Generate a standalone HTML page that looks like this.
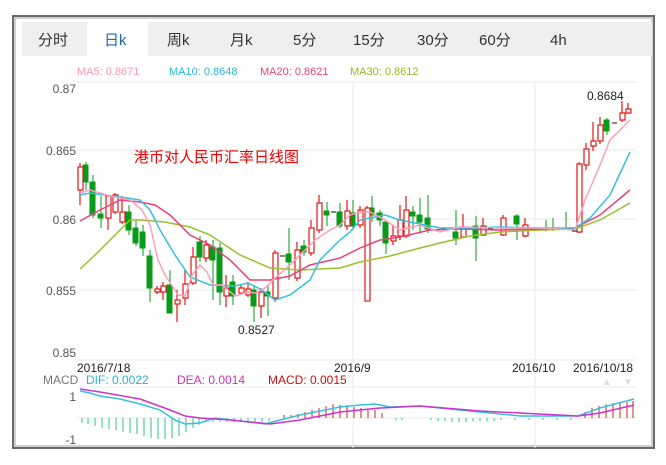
<!DOCTYPE html>
<html><head><meta charset="utf-8"><style>
body{margin:0;background:#fff;width:666px;height:465px;overflow:hidden;font-family:"Liberation Sans","Noto Sans CJK SC",sans-serif}
</style></head><body>
<svg width="666" height="465" xmlns="http://www.w3.org/2000/svg" style="position:absolute;left:0;top:0" font-family="Liberation Sans, Noto Sans CJK SC, sans-serif">
<!-- frame -->
<rect x="13" y="16" width="641" height="432" fill="#fff" stroke="#6a6a6a" stroke-width="2"/>
<rect x="15" y="18" width="637" height="428" fill="none" stroke="#cfcfcf" stroke-width="2"/>
<!-- tabs -->
<rect x="22" y="22" width="630" height="34" fill="#efefef"/>
<rect x="87" y="22" width="61" height="34" fill="#fff"/>
<g font-size="15" fill="#333">
<text x="38" y="45">分时</text>
<text x="104" y="45" fill="#1e69b5">日k</text>
<text x="167" y="45">周k</text>
<text x="230" y="45">月k</text>
<text x="293" y="45">5分</text>
<text x="353" y="45">15分</text>
<text x="417" y="45">30分</text>
<text x="479" y="45">60分</text>
<text x="550" y="45">4h</text>
</g>
<g font-size="11">
<text x="77" y="75" fill="#f79ab8">MA5: 0.8671</text>
<text x="169" y="75" fill="#27b6d9">MA10: 0.8648</text>
<text x="260" y="75" fill="#e8437a">MA20: 0.8621</text>
<text x="350" y="75" fill="#96b821">MA30: 0.8612</text>
</g>
<!-- grid -->
<g stroke="#e8e8e8" stroke-width="1">
<line x1="77" y1="82" x2="636" y2="82"/>
<line x1="77" y1="150" x2="636" y2="150"/>
<line x1="77" y1="219" x2="636" y2="219"/>
<line x1="77" y1="290" x2="636" y2="290"/>
<line x1="77" y1="360" x2="636" y2="360"/>
<line x1="353" y1="82" x2="353" y2="448"/>
<line x1="535" y1="82" x2="535" y2="448"/>
<line x1="77" y1="387" x2="636" y2="387"/>
<line x1="77" y1="418" x2="636" y2="418"/>
</g>
<g font-size="12" fill="#555" text-anchor="end">
<text x="76" y="93">0.87</text>
<text x="76" y="155">0.865</text>
<text x="76" y="224">0.86</text>
<text x="76" y="295">0.855</text>
<text x="76" y="357">0.85</text>
<text x="76" y="401">1</text>
<text x="76" y="444">-1</text>
</g>
<text x="134" y="162" font-size="15" fill="#e00">港币对人民币汇率日线图</text>
<g font-size="12" fill="#222">
<text x="77" y="372">2016/7/18</text>
<text x="334" y="372">2016/9</text>
<text x="512" y="372">2016/10</text>
<text x="573" y="372">2016/10/18</text>
<text x="238" y="334">0.8527</text>
<text x="587" y="100">0.8684</text>
</g>
<text x="43" y="384" font-size="12" fill="#777">MACD</text>
<text x="86" y="384" font-size="12" fill="#27b6d9">DIF: 0.0022</text>
<text x="177" y="384" font-size="12" fill="#cc33bb">DEA: 0.0014</text>
<text x="268" y="384" font-size="12" fill="#c11">MACD: 0.0015</text>
<text x="602" y="385" font-size="10" fill="#ddd">▲</text>
<text x="623" y="385" font-size="10" fill="#ddd">▼</text>
<!-- candles: green filled -->
<g fill="#0a9a1a" stroke="#0a9a1a" stroke-width="1">
<line x1="86" y1="162" x2="86" y2="190"/><rect x="83" y="165" width="5" height="17"/>
<line x1="93" y1="175" x2="93" y2="218"/><rect x="90" y="182" width="5" height="33"/>
<line x1="101" y1="196" x2="101" y2="228"/><rect x="98" y="214" width="5" height="4"/>
<line x1="129" y1="205" x2="129" y2="235"/><rect x="126" y="212" width="5" height="18"/>
<line x1="136" y1="220" x2="136" y2="246"/><rect x="133" y="228" width="5" height="15"/>
<line x1="143" y1="225" x2="143" y2="256"/><rect x="140" y="232" width="5" height="16"/>
<line x1="150" y1="250" x2="150" y2="302"/><rect x="147" y="256" width="5" height="32"/>
<line x1="170" y1="270" x2="170" y2="313"/><rect x="167" y="285" width="5" height="28"/>
<line x1="200" y1="236" x2="200" y2="262"/><rect x="197" y="242" width="5" height="15"/>
<line x1="213" y1="240" x2="213" y2="300"/><rect x="210" y="247" width="5" height="13"/>
<line x1="220" y1="243" x2="220" y2="305"/><rect x="217" y="248" width="5" height="44"/>
<line x1="233" y1="275" x2="233" y2="305"/><rect x="230" y="282" width="5" height="14"/>
<line x1="254" y1="285" x2="254" y2="322"/><rect x="251" y="290" width="5" height="16"/>
<line x1="268" y1="286" x2="268" y2="316"/><rect x="265" y="292" width="5" height="4"/>
<line x1="289" y1="228" x2="289" y2="280"/><rect x="286" y="254" width="5" height="8"/>
<line x1="304" y1="240" x2="304" y2="256"/><rect x="301" y="246" width="5" height="6"/>
<line x1="327" y1="202" x2="327" y2="226"/><rect x="324" y="211" width="5" height="4"/>
<line x1="340" y1="203" x2="340" y2="228"/><rect x="337" y="212" width="5" height="14"/>
<line x1="353" y1="200" x2="353" y2="230"/><rect x="350" y="213" width="5" height="13"/>
<line x1="372" y1="196" x2="372" y2="222"/><rect x="369" y="208" width="5" height="7"/>
<line x1="380" y1="210" x2="380" y2="226"/><rect x="377" y="213" width="5" height="7"/>
<line x1="386" y1="220" x2="386" y2="254"/><rect x="383" y="222" width="5" height="21"/>
<line x1="413" y1="206" x2="413" y2="230"/><rect x="410" y="212" width="5" height="4"/>
<line x1="420" y1="198" x2="420" y2="233"/><rect x="417" y="215" width="5" height="7"/>
<line x1="428" y1="195" x2="428" y2="233"/><rect x="425" y="218" width="5" height="11"/>
<line x1="456" y1="210" x2="456" y2="245"/><rect x="453" y="232" width="5" height="6"/>
<line x1="476" y1="216" x2="476" y2="261"/><rect x="473" y="226" width="5" height="12"/>
<line x1="517" y1="214" x2="517" y2="240"/><rect x="514" y="216" width="5" height="8"/>
<line x1="546" y1="220" x2="546" y2="231"/>
<line x1="553" y1="218" x2="553" y2="231"/>
<line x1="566" y1="212" x2="566" y2="230"/>
<line x1="607" y1="118" x2="607" y2="135"/><rect x="604" y="120" width="5" height="11"/>
</g>
<!-- red hollow -->
<g fill="#fff" stroke="#e31818" stroke-width="1.2">
<line x1="80" y1="163" x2="80" y2="205"/><rect x="78" y="167" width="5" height="23"/>
<line x1="108" y1="195" x2="108" y2="230"/><rect x="106" y="196" width="5" height="22"/>
<line x1="115" y1="193" x2="115" y2="214"/><rect x="113" y="195" width="5" height="17"/>
<line x1="122" y1="196" x2="122" y2="224"/><rect x="120" y="212" width="5" height="10"/>
<line x1="157" y1="286" x2="157" y2="294"/><rect x="155" y="289" width="5" height="3"/>
<line x1="163" y1="282" x2="163" y2="300"/><rect x="161" y="286" width="5" height="6"/>
<line x1="177" y1="290" x2="177" y2="322"/><rect x="175" y="300" width="5" height="4"/>
<line x1="185" y1="270" x2="185" y2="305"/><rect x="183" y="284" width="5" height="14"/>
<line x1="193" y1="247" x2="193" y2="285"/><rect x="191" y="257" width="5" height="26"/>
<line x1="206" y1="240" x2="206" y2="262"/><rect x="204" y="245" width="5" height="13"/>
<line x1="226" y1="275" x2="226" y2="307"/><rect x="224" y="288" width="5" height="8"/>
<line x1="241" y1="285" x2="241" y2="295"/><rect x="239" y="288" width="5" height="5"/>
<line x1="248" y1="282" x2="248" y2="297"/><rect x="246" y="289" width="5" height="6"/>
<line x1="261" y1="288" x2="261" y2="318"/><rect x="259" y="292" width="5" height="14"/>
<line x1="275" y1="250" x2="275" y2="302"/><rect x="273" y="253" width="5" height="45"/>
<line x1="297" y1="242" x2="297" y2="281"/><rect x="295" y="250" width="5" height="28"/>
<line x1="311" y1="220" x2="311" y2="256"/><rect x="309" y="228" width="5" height="25"/>
<line x1="319" y1="195" x2="319" y2="233"/><rect x="317" y="203" width="5" height="27"/>
<line x1="347" y1="200" x2="347" y2="230"/><rect x="345" y="211" width="5" height="15"/>
<line x1="360" y1="206" x2="360" y2="228"/><rect x="358" y="210" width="5" height="15"/>
<line x1="367" y1="206" x2="367" y2="301"/><rect x="365" y="208" width="5" height="93"/>
<line x1="393" y1="225" x2="393" y2="245"/><rect x="391" y="236" width="5" height="5"/>
<line x1="400" y1="205" x2="400" y2="240"/><rect x="398" y="220" width="5" height="16"/>
<line x1="406" y1="196" x2="406" y2="238"/><rect x="404" y="210" width="5" height="26"/>
<line x1="463" y1="214" x2="463" y2="238"/><rect x="461" y="227" width="5" height="10"/>
<line x1="483" y1="218" x2="483" y2="236"/><rect x="481" y="226" width="5" height="9"/>
<line x1="503" y1="215" x2="503" y2="236"/><rect x="501" y="218" width="5" height="17"/>
<line x1="525" y1="218" x2="525" y2="237"/><rect x="523" y="225" width="5" height="11"/>
<line x1="579" y1="162" x2="579" y2="233"/><rect x="577" y="164" width="5" height="68"/>
<line x1="586" y1="143" x2="586" y2="170"/><rect x="584" y="149" width="5" height="16"/>
<line x1="593" y1="122" x2="593" y2="151"/><rect x="591" y="141" width="5" height="5"/>
<line x1="600" y1="117" x2="600" y2="144"/><rect x="598" y="125" width="5" height="16"/>
<line x1="622" y1="101" x2="622" y2="122"/><rect x="620" y="113" width="5" height="7"/>
<line x1="628" y1="103" x2="628" y2="114"/><rect x="626" y="109" width="5" height="4"/>
</g>
<g stroke="#111" stroke-width="1">
<line x1="280" y1="256" x2="285" y2="256"/><line x1="331" y1="212" x2="336" y2="212"/>
<line x1="441" y1="229" x2="446" y2="229"/><line x1="488" y1="229" x2="493" y2="229"/>
<line x1="612" y1="123" x2="617" y2="123"/><line x1="572" y1="231" x2="577" y2="231"/>
</g>
<!-- MA lines -->
<g fill="none" stroke-width="1.5">
<polyline stroke="#9ac12c" points="80,269 95,255 115,235 130,220 140,220 165,222 190,227 210,235 240,255 270,268 300,270 340,268 360,262 390,256 420,248 440,243 470,236 500,232 540,230 575,229 600,220 630,203"/>
<polyline stroke="#e8427a" points="80,221 100,210 120,200 140,202 155,205 170,215 190,235 210,245 230,260 250,280 270,280 290,276 310,265 340,258 360,248 380,240 400,237 430,230 460,229 500,230 540,229 575,228 600,215 630,190"/>
<polyline stroke="#35c0e0" points="80,195 90,193 120,197 140,200 150,210 160,230 175,255 190,277 210,285 235,286 248,283 262,290 275,300 290,295 310,280 320,260 340,240 350,232 360,220 370,218 385,215 400,220 420,224 440,228 470,228 500,227 540,228 575,228 590,218 610,195 630,152"/>
<polyline stroke="#f9a0bd" points="80,193 90,190 110,196 130,200 142,210 150,225 158,260 165,275 178,295 185,296 192,275 200,265 207,272 213,285 222,285 235,296 248,292 256,293 265,288 275,278 290,265 305,250 315,240 330,230 340,225 350,215 360,212 370,212 385,220 400,230 420,225 440,232 460,227 500,228 540,228 575,230 585,200 598,170 610,140 630,120"/>
</g>
<!-- MACD hist -->
<g stroke="#2cc08a" stroke-width="1">
<line x1="82" y1="418" x2="82" y2="423"/><line x1="88" y1="418" x2="88" y2="424"/><line x1="95" y1="418" x2="95" y2="426"/><line x1="102" y1="418" x2="102" y2="428"/><line x1="109" y1="418" x2="109" y2="429"/><line x1="116" y1="418" x2="116" y2="430"/><line x1="123" y1="418" x2="123" y2="432"/><line x1="130" y1="418" x2="130" y2="433"/><line x1="137" y1="418" x2="137" y2="434"/><line x1="144" y1="418" x2="144" y2="436"/><line x1="151" y1="418" x2="151" y2="438"/><line x1="158" y1="418" x2="158" y2="439"/><line x1="165" y1="418" x2="165" y2="439"/><line x1="172" y1="418" x2="172" y2="438"/><line x1="179" y1="418" x2="179" y2="436"/><line x1="186" y1="418" x2="186" y2="432"/><line x1="193" y1="418" x2="193" y2="428"/><line x1="199" y1="418" x2="199" y2="425"/><line x1="206" y1="418" x2="206" y2="422"/><line x1="213" y1="418" x2="213" y2="422"/><line x1="220" y1="418" x2="220" y2="422"/><line x1="227" y1="418" x2="227" y2="422"/><line x1="234" y1="418" x2="234" y2="422"/><line x1="241" y1="418" x2="241" y2="422"/><line x1="248" y1="418" x2="248" y2="422"/><line x1="255" y1="418" x2="255" y2="422"/><line x1="262" y1="418" x2="262" y2="422"/><line x1="269" y1="418" x2="269" y2="421"/>
<line x1="396" y1="418" x2="396" y2="420"/><line x1="402" y1="418" x2="402" y2="420"/><line x1="431" y1="418" x2="431" y2="420"/><line x1="438" y1="418" x2="438" y2="421"/><line x1="445" y1="418" x2="445" y2="421"/><line x1="452" y1="418" x2="452" y2="422"/><line x1="459" y1="418" x2="459" y2="422"/><line x1="466" y1="418" x2="466" y2="422"/><line x1="473" y1="418" x2="473" y2="421"/><line x1="480" y1="418" x2="480" y2="421"/><line x1="487" y1="418" x2="487" y2="421"/><line x1="494" y1="418" x2="494" y2="421"/><line x1="501" y1="418" x2="501" y2="420"/><line x1="515" y1="418" x2="515" y2="420"/><line x1="529" y1="418" x2="529" y2="420"/><line x1="543" y1="418" x2="543" y2="420"/><line x1="557" y1="418" x2="557" y2="420"/><line x1="571" y1="418" x2="571" y2="420"/>
</g>
<g stroke="#d0201a" stroke-width="1">
<line x1="284" y1="418" x2="284" y2="415"/><line x1="291" y1="418" x2="291" y2="415"/><line x1="298" y1="418" x2="298" y2="414"/><line x1="305" y1="418" x2="305" y2="412"/><line x1="312" y1="418" x2="312" y2="410"/><line x1="319" y1="418" x2="319" y2="408"/><line x1="326" y1="418" x2="326" y2="406"/><line x1="333" y1="418" x2="333" y2="404"/><line x1="340" y1="418" x2="340" y2="405"/><line x1="347" y1="418" x2="347" y2="405"/><line x1="354" y1="418" x2="354" y2="407"/><line x1="361" y1="418" x2="361" y2="408"/><line x1="368" y1="418" x2="368" y2="410"/><line x1="375" y1="418" x2="375" y2="410"/><line x1="382" y1="418" x2="382" y2="413"/>
<line x1="585" y1="418" x2="585" y2="412"/><line x1="592" y1="418" x2="592" y2="408"/><line x1="599" y1="418" x2="599" y2="406"/><line x1="606" y1="418" x2="606" y2="404"/><line x1="613" y1="418" x2="613" y2="403"/><line x1="620" y1="418" x2="620" y2="403"/><line x1="627" y1="418" x2="627" y2="402"/><line x1="633" y1="418" x2="633" y2="401"/>
</g>
<g fill="none" stroke-width="1.5">
<polyline stroke="#35c0e0" points="80,391 90,393 100,396 120,399 140,404 160,410 175,420 185,424 200,423 215,418 240,421 265,424 280,420 300,415 340,407 360,405 375,404 390,407 420,406 470,411 520,416 578,416 600,408 634,399"/>
<polyline stroke="#cc33cc" points="80,389 100,392 140,399 170,410 185,416 200,418 230,420 270,424 300,420 340,412 380,408 420,406 480,411 578,416 600,413 634,405"/>
</g>
</svg>
</body></html>
